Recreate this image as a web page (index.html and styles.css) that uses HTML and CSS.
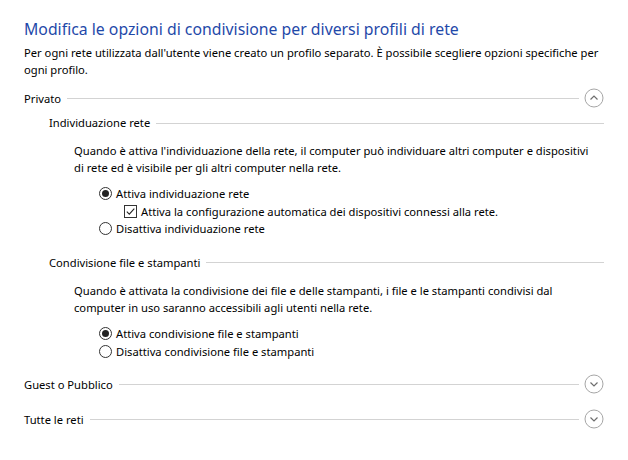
FILE: index.html
```html
<!DOCTYPE html>
<html lang="it">
<head>
<meta charset="utf-8">
<link rel="stylesheet" href="styles.css">
</head>
<body>
<div class="page">
  <h1 class="title">Modifica le opzioni di condivisione per diversi profili di rete</h1>
  <p class="desc">Per ogni rete utilizzata dall'utente viene creato un profilo separato. È possibile scegliere opzioni specifiche per ogni profilo.</p>

  <div class="profile profile-private">
    <span class="profile-name">Privato</span>
    <span class="rule"></span>
    <span class="toggle"><svg viewBox="0 0 20 20" width="20" height="20"><circle cx="10" cy="10" r="9" fill="none" stroke="#a6a6a6" stroke-width="1"/><path d="M6.5 11.5 L10 8 L13.5 11.5" fill="none" stroke="#6e6e6e" stroke-width="1.2"/></svg></span>
  </div>

  <div class="section">
    <div class="section-head sh-first"><span>Individuazione rete</span><span class="rule"></span></div>
    <p class="para">Quando è attiva l'individuazione della rete, il computer può individuare altri computer e dispositivi di rete ed è visibile per gli altri computer nella rete.</p>
    <div class="options">
      <div class="opt"><span class="radio checked"></span><span>Attiva individuazione rete</span></div>
      <div class="opt sub"><span class="check"><svg viewBox="0 0 13 13" width="13" height="13"><rect x="0.5" y="0.5" width="12" height="12" fill="#fff" stroke="#333"/><path d="M2.8 6.6 L5.3 9.1 L10.3 3.6" fill="none" stroke="#222" stroke-width="1.1"/></svg></span><span>Attiva la configurazione automatica dei dispositivi connessi alla rete.</span></div>
      <div class="opt"><span class="radio"></span><span>Disattiva individuazione rete</span></div>
    </div>

    <div class="section-head sh-second"><span>Condivisione file e stampanti</span><span class="rule"></span></div>
    <p class="para para-2">Quando è attivata la condivisione dei file e delle stampanti, i file e le stampanti condivisi dal computer in uso saranno accessibili agli utenti nella rete.</p>
    <div class="options options-2">
      <div class="opt"><span class="radio checked"></span><span>Attiva condivisione file e stampanti</span></div>
      <div class="opt"><span class="radio"></span><span>Disattiva condivisione file e stampanti</span></div>
    </div>
  </div>

  <div class="profile profile-guest">
    <span class="profile-name">Guest o Pubblico</span>
    <span class="rule"></span>
    <span class="toggle"><svg viewBox="0 0 20 20" width="20" height="20"><circle cx="10" cy="10" r="9" fill="none" stroke="#a6a6a6" stroke-width="1"/><path d="M6.5 8.5 L10 12 L13.5 8.5" fill="none" stroke="#6e6e6e" stroke-width="1.2"/></svg></span>
  </div>
  <div class="profile profile-all">
    <span class="profile-name">Tutte le reti</span>
    <span class="rule"></span>
    <span class="toggle"><svg viewBox="0 0 20 20" width="20" height="20"><circle cx="10" cy="10" r="9" fill="none" stroke="#a6a6a6" stroke-width="1"/><path d="M6.5 8.5 L10 12 L13.5 8.5" fill="none" stroke="#6e6e6e" stroke-width="1.2"/></svg></span>
  </div>
</div>
</body>
</html>
```

FILE: styles.css
```css
html, body {
  margin: 0;
  padding: 0;
  background: #ffffff;
}
body {
  font-family: "Segoe UI", "Noto Sans", "Open Sans", sans-serif;
  font-size: 11.2px;
  line-height: 17px;
  color: #000000;
}
.page {
  padding: 18px 24px 0 24px;
  width: 580px;
}
.title {
  margin: 0;
  font-size: 15.8px;
  line-height: 22px;
  font-weight: normal;
  color: #1f49a9;
}
.desc {
  margin: 4px 0 0 0;
}
.profile {
  display: flex;
  align-items: center;
  height: 20px;
}
.profile-private { margin-top: 10px; }
.profile-guest { margin-top: 14.5px; }
.profile-all { margin-top: 15px; }
.profile-name {
  white-space: nowrap;
}
.rule {
  flex: 1;
  height: 1px;
  background: #d3d3d3;
  margin-left: 6px;
}
.profile .rule {
  margin-right: 5px;
  margin-top: 1px;
}
.toggle {
  width: 20px;
  height: 20px;
  display: flex;
}
.section {
  padding-left: 25px;
}
.section-head {
  display: flex;
  align-items: center;
  height: 17px;
}
.section-head .rule {
  margin-top: 1px;
}
.sh-first { margin-top: 6px; }
.sh-second { margin-top: 16.5px; }
.para {
  margin: 12px 4px 0 25px;
  line-height: 16.5px;
}
.para-2 { margin-top: 12.5px; }
.options {
  margin: 9px 0 0 50px;
  display: flex;
  flex-direction: column;
}
.options-2 { margin-top: 8.5px; }
.opt {
  display: flex;
  align-items: center;
  height: 17px;
  white-space: nowrap;
}
.opt + .opt { margin-top: 0.5px; }
.options-2 .opt + .opt { margin-top: 1px; }
.opt.sub { margin-left: 25px; }
.radio {
  box-sizing: border-box;
  width: 13px;
  height: 13px;
  border: 1px solid #333333;
  border-radius: 50%;
  margin-right: 4px;
  display: flex;
  align-items: center;
  justify-content: center;
  flex: none;
}
.radio.checked::after {
  content: "";
  width: 7px;
  height: 7px;
  border-radius: 50%;
  background: #222222;
}
.check {
  width: 13px;
  height: 13px;
  margin-right: 4px;
  display: flex;
  flex: none;
}
```
